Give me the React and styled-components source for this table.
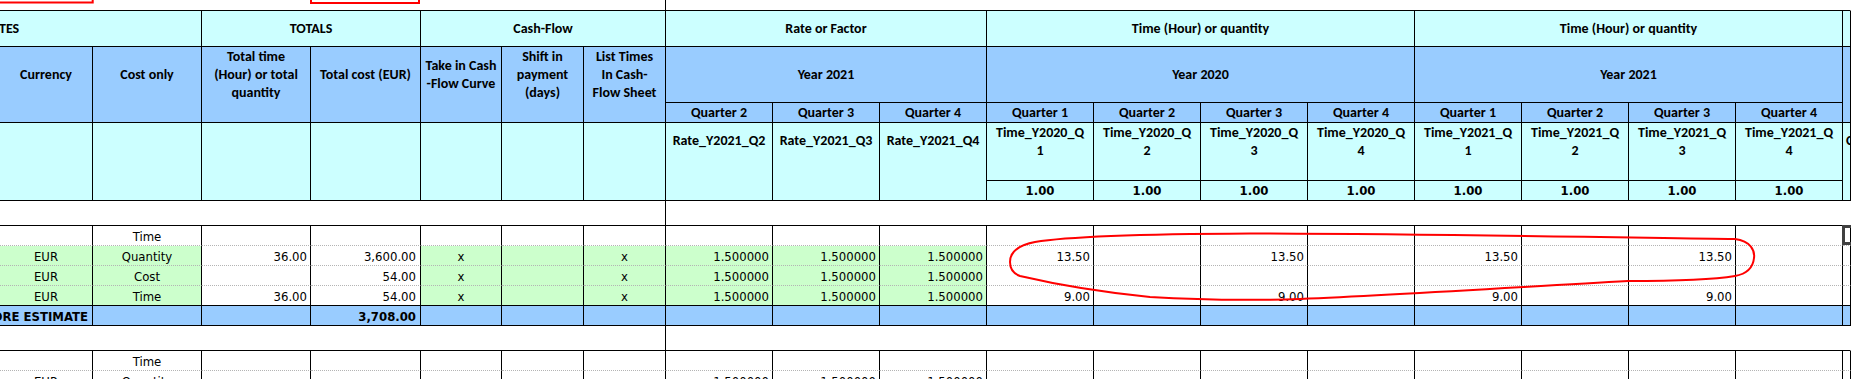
import styled, { createGlobalStyle, css } from "styled-components";

const HEAD_FONT = `Carlito, Calibri, Lato, "Liberation Sans", sans-serif`;
const DATA_FONT = `Tahoma, "DejaVu Sans Condensed", "Liberation Sans", sans-serif`;

const FILLS = { w: "#FFFFFF", c: "#CCFFFF", b: "#99CCFF", g: "#CCFFCC" };

const GlobalStyle = createGlobalStyle`
  html, body {
    margin: 0;
    padding: 0;
    background: #fff;
  }
  body {
    width: 1851px;
    height: 379px;
    overflow: hidden;
  }
`;

const Sheet = styled.div`
  position: relative;
  display: grid;
  grid-template-columns: 93px 109px 109px 110px 81px 82px 82px repeat(11, 107px) 1fr;
  grid-template-rows: 11px 36px 56px 20px 58px 20px 25px repeat(5, 20px) 25px 20px 20px;
  width: 1851px;
  height: 379px;
  overflow: hidden;
  color: #000;
`;

const Cell = styled.div`
  grid-column: ${(p) => p.$col} / span ${(p) => p.$span || 1};
  grid-row: ${(p) => p.$row} / span ${(p) => p.$rows || 1};
  box-sizing: border-box;
  min-width: 0;
  display: flex;
  overflow: hidden;
  white-space: nowrap;
  background: ${(p) => FILLS[p.$fill || "w"]};
  border-right: 1px solid ${(p) => (p.$open ? "transparent" : "#000")};
  border-bottom: 1px ${(p) => (p.$dotted ? "dotted #b4b4b4" : "solid #000")};
`;

const StripCell = styled(Cell)``;

const GroupHead = styled(Cell)`
  align-items: center;
  justify-content: ${(p) => (p.$left ? "flex-start" : "center")};
  font: bold 14px ${HEAD_FONT};
  ${(p) => p.$left && css`margin-left: -1px;`}
`;

const ColumnHead = styled(Cell)`
  flex-direction: column;
  align-items: center;
  justify-content: center;
  padding-bottom: 20px;
  text-align: center;
  font: bold 14px/18px ${HEAD_FONT};
`;

const YearHead = styled(Cell)`
  align-items: center;
  justify-content: center;
  font: bold 14px ${HEAD_FONT};
`;

const QuarterHead = styled(Cell)`
  align-items: center;
  justify-content: center;
  font: bold 14px ${HEAD_FONT};
`;

const RateName = styled(Cell)`
  justify-content: ${(p) => (p.$left ? "flex-start" : "center")};
  padding: 9px 0 0 ${(p) => (p.$left ? "3px" : "0")};
  font: bold 14px/18px ${HEAD_FONT};
`;

const TimeName = styled(Cell)`
  flex-direction: column;
  align-items: center;
  padding-top: 1px;
  text-align: center;
  font: bold 14px/18px ${HEAD_FONT};
`;

const UnitValue = styled(Cell)`
  align-items: center;
  justify-content: center;
  font: bold 13px ${DATA_FONT};
`;

const DataCell = styled(Cell)`
  align-items: center;
  justify-content: ${(p) => (p.$align === "center" ? "center" : "flex-end")};
  padding: 1px ${(p) => (p.$align === "wide" ? "4px" : "3px")} 0;
  font: ${(p) => (p.$bold ? "bold" : "normal")} 13px ${DATA_FONT};
  ${(p) =>
    p.$selected &&
    css`
      position: relative;
      overflow: visible;
      &::after {
        content: "";
        position: absolute;
        left: -1px;
        top: -1px;
        width: 24px;
        bottom: 0;
        border: 3px solid #404040;
      }
    `}
`;

const Markup = styled.svg`
  position: absolute;
  left: 0;
  top: 0;
  width: 1851px;
  height: 379px;
  pointer-events: none;
`;

const columnHeads = [
  ["Currency"],
  ["Cost only"],
  ["Total time", "(Hour) or total", "quantity"],
  ["Total cost (EUR)"],
  ["Take in Cash", "-Flow Curve"],
  ["Shift in", "payment", "(days)"],
  ["List Times", "In Cash-", "Flow Sheet"],
];

const years = [
  { col: 8, span: 3, label: "Year 2021" },
  { col: 11, span: 4, label: "Year 2020" },
  { col: 15, span: 4, label: "Year 2021" },
];

const quarters = [2, 3, 4, 1, 2, 3, 4, 1, 2, 3, 4];

const timeNames = [2020, 2021].flatMap((y) => [1, 2, 3, 4].map((q) => [`Time_Y${y}_Q`, q]));

// "wide" = right aligned with a little more room, as in the first and cost columns
const ALIGN = [
  "wide", "center", "right", "wide", "center", "center", "center",
  ...Array(12).fill("right"),
];

const G = "g";
const W = "w";
const B = "b";
const rate = "1.500000";
const green = [G, G, W, W, G, G, G, G, G, G, ...Array(9).fill(W)];
const white = Array(19).fill(W);

const dataRows = [
  { row: 8, dotted: true, fills: white, values: ["", "Time"] },
  {
    row: 9,
    dotted: true,
    fills: green,
    values: ["EUR", "Quantity", "36.00", "3,600.00", "x", "", "x", rate, rate, rate,
      "13.50", "", "13.50", "", "13.50", "", "13.50", "", ""],
  },
  {
    row: 10,
    dotted: true,
    fills: green,
    values: ["EUR", "Cost", "", "54.00", "x", "", "x", rate, rate, rate],
  },
  {
    row: 11,
    fills: green,
    values: ["EUR", "Time", "36.00", "54.00", "x", "", "x", rate, rate, rate,
      "9.00", "", "9.00", "", "9.00", "", "9.00", "", ""],
  },
  { row: 12, bold: true, fills: Array(19).fill(B), values: ["ORE ESTIMATE", "", "", "3,708.00"] },
  { row: 14, dotted: true, fills: white, values: ["", "Time"] },
  { row: 15, dotted: true, fills: white, values: ["EUR", "Quantity", "", "", "", "", "", rate, rate, rate] },
];

// currency column is centered except on the estimate row, whose label runs in from the left
const alignFor = (r, c) => (c === 0 && !r.bold ? "center" : ALIGN[c]);

const App = () => {
  return (
    <>
      <GlobalStyle />
      <Sheet>
        <StripCell $col={1} $span={7} $row={1} />
        <StripCell $col={8} $span={12} $row={1} $open />

        <GroupHead $col={1} $span={2} $row={2} $fill="c" $left>TES</GroupHead>
        <GroupHead $col={3} $span={2} $row={2} $fill="c">TOTALS</GroupHead>
        <GroupHead $col={5} $span={3} $row={2} $fill="c">Cash-Flow</GroupHead>
        <GroupHead $col={8} $span={3} $row={2} $fill="c">Rate or Factor</GroupHead>
        <GroupHead $col={11} $span={4} $row={2} $fill="c">Time (Hour) or quantity</GroupHead>
        <GroupHead $col={15} $span={4} $row={2} $fill="c">Time (Hour) or quantity</GroupHead>
        <GroupHead $col={19} $row={2} $fill="c" />

        {columnHeads.map((lines, i) => (
          <ColumnHead key={i} $col={i + 1} $row={3} $rows={2} $fill="b">
            {lines.map((l) => (
              <span key={l}>{l}</span>
            ))}
          </ColumnHead>
        ))}
        {years.map((y) => (
          <YearHead key={y.col} $col={y.col} $span={y.span} $row={3} $fill="b">
            {y.label}
          </YearHead>
        ))}
        <YearHead $col={19} $row={3} $rows={2} $fill="b" />
        {quarters.map((q, i) => (
          <QuarterHead key={i} $col={8 + i} $row={4} $fill="b">
            Quarter {q}
          </QuarterHead>
        ))}

        {columnHeads.map((_, i) => (
          <RateName key={i} $col={i + 1} $row={5} $rows={2} $fill="c" />
        ))}
        {[2, 3, 4].map((q, i) => (
          <RateName key={q} $col={8 + i} $row={5} $rows={2} $fill="c">
            Rate_Y2021_Q{q}
          </RateName>
        ))}
        {timeNames.map(([name, q], i) => (
          <TimeName key={name + q} $col={11 + i} $row={5} $fill="c">
            <span>{name}</span>
            <span>{q}</span>
          </TimeName>
        ))}
        {timeNames.map(([name, q], i) => (
          <UnitValue key={name + q} $col={11 + i} $row={6} $fill="c">
            1.00
          </UnitValue>
        ))}
        <RateName $col={19} $row={5} $rows={2} $fill="c" $left>
          Comments
        </RateName>

        <StripCell $col={1} $span={7} $row={7} />
        <StripCell $col={8} $span={12} $row={7} $open />

        {dataRows.map((r) =>
          ALIGN.map((_, c) => (
            <DataCell
              key={`${r.row}-${c}`}
              $col={c + 1}
              $row={r.row}
              $fill={r.fills[c]}
              $align={alignFor(r, c)}
              $bold={r.bold}
              $dotted={r.dotted}
              $selected={r.row === 8 && c === 18}
            >
              {r.values[c] || ""}
            </DataCell>
          ))
        )}

        <StripCell $col={1} $span={7} $row={13} />
        <StripCell $col={8} $span={12} $row={13} $open />

        <Markup viewBox="0 0 1851 379">
          <g fill="none" stroke="#FF0000" strokeWidth="2">
            <rect x="-20" y="-20" width="112.7" height="22.5" />
            <rect x="311" y="-20" width="108" height="23" />
            <path
              d="M 1010 262
                 C 1010 252, 1019 245, 1035 242
                 C 1070 236, 1150 234, 1250 233.5
                 C 1450 234, 1650 238, 1735 239
                 C 1751 241, 1755 251, 1754 258
                 C 1753 268, 1746 274, 1735 276
                 C 1705 281, 1660 281, 1628 281
                 C 1520 287, 1400 295, 1300 299
                 C 1250 300.5, 1200 300, 1150 297
                 C 1100 292, 1050 283, 1020 276
                 C 1012 273, 1010 268, 1010 262 Z"
            />
          </g>
        </Markup>
      </Sheet>
    </>
  );
};

export default App;
